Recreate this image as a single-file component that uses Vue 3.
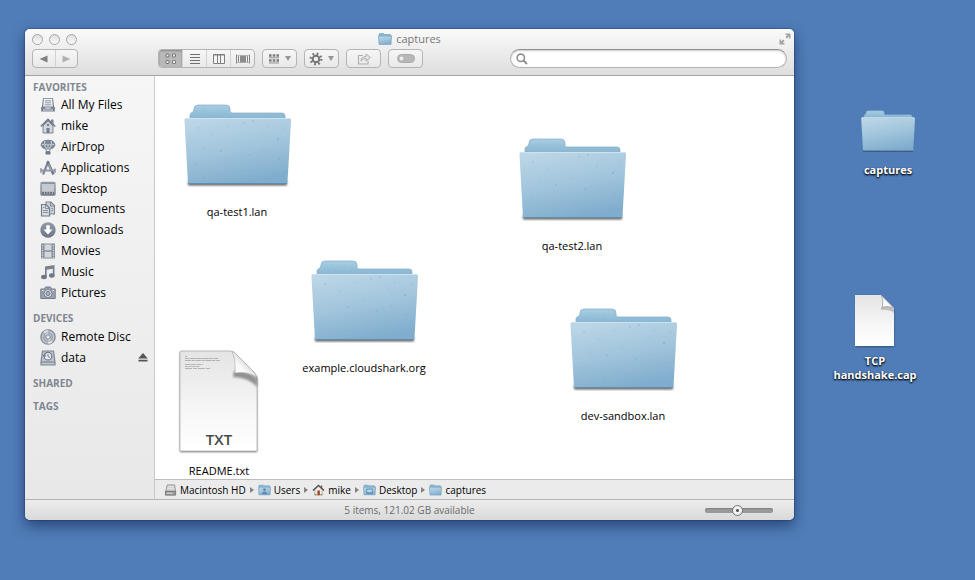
<script setup>
import { ref } from 'vue'

const favorites = [
  { name: 'All My Files', icon: 'all-files' },
  { name: 'mike', icon: 'home' },
  { name: 'AirDrop', icon: 'airdrop' },
  { name: 'Applications', icon: 'apps' },
  { name: 'Desktop', icon: 'desktop' },
  { name: 'Documents', icon: 'documents' },
  { name: 'Downloads', icon: 'downloads' },
  { name: 'Movies', icon: 'movies' },
  { name: 'Music', icon: 'music' },
  { name: 'Pictures', icon: 'pictures' },
]
const devices = [
  { name: 'Remote Disc', icon: 'disc' },
  { name: 'data', icon: 'drive', eject: true },
]
const items = [
  { name: 'qa-test1.lan', kind: 'folder', x: 12, y: 28 },
  { name: 'qa-test2.lan', kind: 'folder', x: 347, y: 62 },
  { name: 'example.cloudshark.org', kind: 'folder', x: 139, y: 184 },
  { name: 'dev-sandbox.lan', kind: 'folder', x: 398, y: 232 },
  { name: 'README.txt', kind: 'text', x: -6, y: 274 },
]
const path = [
  { name: 'Macintosh HD', icon: 'hd' },
  { name: 'Users', icon: 'folder-users' },
  { name: 'mike', icon: 'home-color' },
  { name: 'Desktop', icon: 'folder-desktop' },
  { name: 'captures', icon: 'folder-small' },
]
const views = [
  { name: 'Icons', icon: 'view-icons' },
  { name: 'List', icon: 'view-list' },
  { name: 'Columns', icon: 'view-columns' },
  { name: 'Cover Flow', icon: 'view-flow' },
]
const activeView = ref('Icons')
const query = ref('')
const zoom = ref(48)
</script>

<template>
  <div class="desktop">
    <svg class="sprite" width="0" height="0" aria-hidden="true">
      <defs>
        <linearGradient id="gFront" x1="0.2" y1="0" x2="0.5" y2="1">
          <stop offset="0" stop-color="#bcd6e6" />
          <stop offset="0.5" stop-color="#a1c5dc" />
          <stop offset="1" stop-color="#80adcd" />
        </linearGradient>
        <linearGradient id="gBack" x1="0" y1="0" x2="0" y2="1">
          <stop offset="0" stop-color="#a9cee3" />
          <stop offset="0.35" stop-color="#8fbbd6" />
          <stop offset="1" stop-color="#6d9fc2" />
        </linearGradient>
        <linearGradient id="gPaper" x1="0" y1="0" x2="0" y2="1">
          <stop offset="0" stop-color="#e4e4e4" />
          <stop offset="0.6" stop-color="#f7f7f7" />
          <stop offset="1" stop-color="#ffffff" />
        </linearGradient>
        <linearGradient id="gCurl" x1="0" y1="1" x2="0.6" y2="0.4">
          <stop offset="0" stop-color="#ffffff" />
          <stop offset="0.6" stop-color="#fafafa" />
          <stop offset="1" stop-color="#d8d8d8" />
        </linearGradient>
        <linearGradient id="gSide" x1="0" y1="0" x2="0" y2="1">
          <stop offset="0" stop-color="#929ba8" />
          <stop offset="1" stop-color="#6b7584" />
        </linearGradient>
        <filter id="soft" x="-20%" y="-20%" width="140%" height="140%">
          <feGaussianBlur stdDeviation="1.2" />
        </filter>
      </defs>

      <symbol id="folder" viewBox="0 0 107 84">
        <rect x="4" y="77" width="99" height="4.500" rx="1" fill="#222" opacity="0.7" filter="url(#soft)" />
        <path d="M6 16V11Q6 9 8 8.500Q10 8 10 5Q10 1 14 1H42Q46 1 46 5V7Q46 9 49 9H98Q101 9 101 12V16L103 30H5Z" fill="url(#gBack)" stroke="#85adc8" stroke-width="0.700" />
        <path d="M2 14H105Q107 14 107 17L103.500 78Q103.400 80 102 80H5.500Q4 80 3.900 78L0.500 17Q0.300 14 2 14Z" fill="url(#gFront)" />
        <path d="M1.500 14.500H105.500" stroke="#cfe3ef" stroke-width="1" />
        <path d="M4.500 79.500H103" stroke="#5f8db0" stroke-width="1.200" />
        <g fill="#6c9dbf" opacity="0.55">
          <circle cx="14" cy="24" r="0.700" /><circle cx="29" cy="31" r="0.600" /><circle cx="44" cy="22" r="0.600" />
          <circle cx="60" cy="19" r="0.700" /><circle cx="69" cy="17" r="0.800" /><circle cx="78" cy="29" r="0.600" />
          <circle cx="94" cy="35" r="0.900" /><circle cx="84" cy="22" r="0.600" /><circle cx="100" cy="24" r="0.600" />
          <circle cx="20" cy="44" r="0.600" /><circle cx="37" cy="47" r="0.800" /><circle cx="52" cy="40" r="0.600" />
          <circle cx="66" cy="51" r="0.800" /><circle cx="80" cy="46" r="0.600" /><circle cx="95" cy="55" r="0.700" />
          <circle cx="12" cy="60" r="0.700" /><circle cx="27" cy="64" r="0.600" /><circle cx="44" cy="60" r="0.600" />
          <circle cx="57" cy="67" r="0.700" /><circle cx="65" cy="72" r="0.700" /><circle cx="75" cy="63" r="0.600" />
          <circle cx="90" cy="70" r="0.600" /><circle cx="20" cy="73" r="0.600" /><circle cx="35" cy="71" r="0.700" />
          <circle cx="20" cy="5" r="0.600" /><circle cx="34" cy="6" r="0.600" />
        </g>
      </symbol>

      <symbol id="paper-text" viewBox="0 0 82 106">
        <path d="M2 2H54L79 27V102H2Z" fill="#000" opacity="0.55" filter="url(#soft)" />
        <path d="M3 1H52Q56 1 60 6L76 22Q79 26 79 32V101H2V2Z" fill="url(#gPaper)" stroke="#a9a9a9" stroke-width="0.700" />
        <path d="M56 21Q69 20 79 28V37Q70 27 55 27Z" fill="#555" opacity="0.6" filter="url(#soft)" />
        <path d="M54 1.500Q58 10 57 23Q69 21 78.500 27Q77 23 74 20L60 6Q57 2 54 1.500Z" fill="url(#gCurl)" stroke="#a8a8a8" stroke-width="0.600" />
        <g stroke="#a5a5a5" stroke-width="0.800">
          <path d="M7 6.500H9" /><path d="M7 8.500H40" stroke-dasharray="4 0.600 7 0.500" />
          <path d="M7 10.500H42" stroke-dasharray="6 0.600 3 0.600" /><path d="M7 14.500H25" stroke-dasharray="5 0.700" />
          <path d="M7 16.500H22" stroke-dasharray="3 0.600" /><path d="M7 18.500H32" stroke-dasharray="7 1 4 1" />
        </g>
      </symbol>

      <symbol id="paper" viewBox="0 0 42 54">
        <path d="M2 2H27L40 15V53H2Z" fill="#000" opacity="0.35" filter="url(#soft)" />
        <path d="M1 1H27L40 14V52H1Z" fill="url(#gPaper)" />
        <path d="M27 13Q35 12 40 15V19Q35 15 27 16Z" fill="#777" opacity="0.4" />
        <path d="M27.500 1.500Q29.500 6 28.500 13Q35 11.500 39.500 14Z" fill="#fafafa" stroke="#a0a0a0" stroke-width="0.800" />
      </symbol>

      <symbol id="all-files" viewBox="0 0 16 16">
        <path d="M3.500 1.500H12.500L13.500 10H2.500Z" fill="#f2f3f5" stroke="url(#gSide)" stroke-width="1.200" />
        <path d="M5 3.800H11M5 5.800H11M4.800 7.800H11.200" stroke="#8a93a1" />
        <path d="M1 10H4.500L5.500 11.500H10.500L11.500 10H15V14.500H1Z" fill="#7d8795" />
        <path d="M3 13H13" stroke="#cfd3d9" />
      </symbol>
      <symbol id="home" viewBox="0 0 16 16">
        <path d="M11 1.500H13.500V6H11Z" fill="#7d8795" />
        <path d="M3 8L8 3L13 8V15H3Z" fill="#d3d7dd" stroke="#7d8795" />
        <path d="M0.800 8.500L8 1.500L15.200 8.500" fill="none" stroke="#727c8b" stroke-width="1.700" />
        <path d="M6.500 10H9.500V15H6.500Z" fill="#727c8b" /><circle cx="8" cy="7" r="1.200" fill="#727c8b" />
      </symbol>
      <symbol id="airdrop" viewBox="0 0 16 16">
        <path d="M0.500 6Q1.500 0.800 8 0.800Q14.500 0.800 15.500 6Q14.500 9 10.500 10.500H5.500Q1.500 9 0.500 6Z" fill="#7d8795" />
        <path d="M8 6V10M4.800 6L6.500 10M11.200 6L9.500 10M1.500 6Q3 4.500 4.800 6Q6.500 4.500 8 6Q9.500 4.500 11.200 6Q13 4.500 14.500 6M5 2Q4.200 4 4.800 5.500M11 2Q11.800 4 11.200 5.500" fill="none" stroke="#dde0e4" stroke-width="0.800" />
        <path d="M6 10.500L6.500 12.500H9.500L10 10.500" fill="none" stroke="#7d8795" /><path d="M5.500 12.500H10.500V15.500H5.500Z" fill="#727c8b" />
      </symbol>
      <symbol id="apps" viewBox="0 0 16 16">
        <path d="M8.500 1L3 14.500" stroke="#7d8795" stroke-width="2.200" /><path d="M7.500 1.500L13.500 14.500" stroke="#6c7685" stroke-width="2.600" />
        <path d="M0.500 10.500H15.500" stroke="#8b94a2" stroke-width="2" />
        <path d="M1 8V13M15 8.500V13" stroke="#8b94a2" stroke-width="1.300" /><path d="M8.500 4L11.500 10.500" stroke="#d5d8dd" stroke-width="0.600" />
      </symbol>
      <symbol id="desktop" viewBox="0 0 16 16">
        <rect x="1" y="1.500" width="14" height="12.500" rx="1" fill="#c5cad1" stroke="url(#gSide)" stroke-width="1.300" />
        <path d="M1 2.500H15" stroke="#8a93a0" stroke-width="1" /><path d="M2 12H14" stroke="#69727f" stroke-width="2.500" stroke-dasharray="2 0.700" />
      </symbol>
      <symbol id="documents" viewBox="0 0 16 16">
        <path d="M6 1H11L14.500 4.500V13H6Z" fill="#ccd0d6" stroke="#7d8795" stroke-width="1.100" />
        <path d="M10.500 1V5H14.500M11.500 7.500H13M11.500 9.500H13" fill="none" stroke="#7d8795" />
        <path d="M1.500 3.500H6L9.500 7V15H1.500Z" fill="#d9dce1" stroke="#727c8b" stroke-width="1.200" />
        <path d="M5.500 3.500V7.500H9.500M3 9.500H8M3 11.500H8M3 6.500H4.500" fill="none" stroke="#7d8795" stroke-width="0.900" />
      </symbol>
      <symbol id="downloads" viewBox="0 0 16 16">
        <circle cx="8" cy="8" r="7.700" fill="url(#gSide)" /><path d="M6.300 3.300H9.700V7.500H12.500L8 12.500L3.500 7.500H6.300Z" fill="#fff" />
      </symbol>
      <symbol id="movies" viewBox="0 0 16 16">
        <rect x="1" y="0.500" width="14" height="15" fill="#858e9b" />
        <path d="M4.500 1.500H11.500V7.300H4.500ZM4.500 8.700H11.500V14.500H4.500Z" fill="#d3d7dc" />
        <path d="M2.500 2V15M13.500 2V15" stroke="#dfe2e6" stroke-width="1.200" stroke-dasharray="1.200 1.200" />
      </symbol>
      <symbol id="music" viewBox="0 0 16 16">
        <path d="M5 2.500L14.500 1V11.500H12.800V4.800L6.700 5.800V13H5Z" fill="#78828f" />
        <ellipse cx="4" cy="13" rx="2.900" ry="2.200" fill="#6d7786" /><ellipse cx="11.800" cy="11.500" rx="2.800" ry="2.200" fill="#6d7786" />
      </symbol>
      <symbol id="pictures" viewBox="0 0 16 16">
        <path d="M0.800 4H4.500L5.500 2H10.500L11.500 4H15.200V13.500H0.800Z" fill="#9ba3af" stroke="#737d8b" />
        <circle cx="8" cy="8.500" r="4" fill="#e8eaed" stroke="#737d8b" /><circle cx="8" cy="8.500" r="2.100" fill="#a9b0ba" stroke="#737d8b" /><path d="M2 5.500H3.500M12.500 5.500H14" stroke="#e8eaed" />
      </symbol>
      <symbol id="disc" viewBox="0 0 16 16">
        <circle cx="8" cy="8" r="7.200" fill="#b9bfc8" stroke="#828b98" stroke-width="1.200" />
        <path d="M8 8L3.500 2.500A7 7 0 0 1 8 1.200ZM8 8L12.500 13.500A7 7 0 0 1 8 14.800Z" fill="#dfe2e6" />
        <circle cx="8" cy="8" r="4.300" fill="none" stroke="#929aa6" stroke-width="0.800" /><circle cx="8" cy="8" r="2.200" fill="#eceef0" stroke="#7d8795" />
      </symbol>
      <symbol id="drive" viewBox="0 0 16 16">
        <path d="M2.500 1H13.500L15 12V15H1V12Z" fill="#bdc3cb" stroke="#7d8795" stroke-width="1.200" />
        <circle cx="8" cy="6.200" r="3.800" fill="#e9ebee" stroke="#727c8b" stroke-width="1.200" /><path d="M8 4V6.500L10 7.500M3 4.500L4.500 7L6 5M1.500 12H14.500" fill="none" stroke="#727c8b" />
      </symbol>

      <symbol id="folder-small" viewBox="0 0 14 12">
        <path d="M1 3V1.500Q1 0.500 2 0.500H5Q6 0.500 6.200 1.500H12Q13 1.500 13 3V6H1Z" fill="#8cb7d3" stroke="#7ba5c2" stroke-width="0.700" />
        <path d="M0.500 3H13.500L13 11.500H1Z" fill="url(#gFront)" stroke="#7ba5c2" stroke-width="0.700" />
      </symbol>
      <symbol id="folder-users" viewBox="0 0 14 12">
        <use href="#folder-small" width="14" height="12" /><circle cx="7" cy="5.700" r="1.500" fill="#5b8db2" /><path d="M4 10.500Q4.500 7.500 7 7.500Q9.500 7.500 10 10.500Z" fill="#5b8db2" />
      </symbol>
      <symbol id="folder-desktop" viewBox="0 0 14 12">
        <use href="#folder-small" width="14" height="12" /><rect x="4" y="5" width="6" height="4.500" fill="#b9d7e9" stroke="#5b8db2" /><path d="M4 9H10" stroke="#5b8db2" />
      </symbol>
      <symbol id="hd" viewBox="0 0 14 12">
        <path d="M3.500 0.500H11.500L12.500 7.500H1.800Z" fill="#cfcfcf" stroke="#999" /><path d="M1.500 7.500H12.500V11.500H1.500Z" fill="#a2a2a2" stroke="#737373" />
        <path d="M4 2.500H10.500M3.700 4.500H10.800" stroke="#eee" stroke-width="0.800" /><path d="M3 9.500H9" stroke="#ddd" />
      </symbol>
      <symbol id="home-color" viewBox="0 0 14 12">
        <path d="M3 6L7 2L11 6V11.500H3Z" fill="#f3eee8" stroke="#8f8983" stroke-width="0.700" /><path d="M9.500 1H11V4H9.500Z" fill="#8e5849" />
        <path d="M1 6.500L7 1L13 6.500" fill="none" stroke="#514d4a" stroke-width="1.400" /><path d="M5.800 6.500H8.500V11.500H5.800Z" fill="#a9472f" /><path d="M3 10.800H5M9 10.800H11" stroke="#7a9a55" />
      </symbol>

      <symbol id="view-icons" viewBox="0 0 14 12">
        <g fill="#eee" stroke="#696969"><rect x="2" y="1" width="3" height="3" rx="0.800" /><rect x="8.500" y="1" width="3" height="3" rx="0.800" /><rect x="2" y="7.500" width="3" height="3" rx="0.800" /><rect x="8.500" y="7.500" width="3" height="3" rx="0.800" /></g>
      </symbol>
      <symbol id="view-list" viewBox="0 0 14 12"><path d="M2 1.500H12M2 4.500H12M2 7.500H12M2 10.500H12" stroke="#707070" /></symbol>
      <symbol id="view-columns" viewBox="0 0 14 12"><path d="M1.500 1.500H12.500V10.500H1.500ZM5.500 1V10.500M8.500 1V10.500" fill="#f4f4f4" stroke="#808080" /><path d="M1 2H13" stroke="#808080" /></symbol>
      <symbol id="view-flow" viewBox="0 0 14 12"><rect x="4" y="2.500" width="6" height="7" fill="#8b8b8b" /><path d="M0.500 1.500V10.500M2.500 2.500V9.500M11.500 2.500V9.500M13.500 1.500V10.500" stroke="#858585" /><path d="M0 9.500H14M0 2.500H14" stroke="#999" stroke-width="0.500" /></symbol>
      <symbol id="arrange" viewBox="0 0 12 10">
        <path d="M1 1.500H11M1 6.500H11" stroke="#7d7d7d" stroke-width="2.600" stroke-dasharray="2.600 1.100" /><path d="M1 3.800H11M1 9H11" stroke="#939393" stroke-width="1" />
      </symbol>
      <symbol id="gear" viewBox="0 0 14 14">
        <circle cx="7" cy="7" r="5.300" fill="none" stroke="#757575" stroke-width="2.400" stroke-dasharray="1.700 2.463" /><circle cx="7" cy="7" r="3.300" fill="none" stroke="#757575" stroke-width="2" />
      </symbol>
      <symbol id="share" viewBox="0 0 14 12">
        <path d="M6 2.500H1.500V11H11V7.500" fill="none" stroke="#b0b0b0" stroke-width="1.200" /><path d="M4 8Q4 3.500 9 3.500V1L13.500 4.500L9 8V5.500Q6 5.500 4 8Z" fill="#e6e6e6" stroke="#adadad" />
      </symbol>
      <symbol id="tag" viewBox="0 0 18 9"><rect x="0.500" y="0.500" width="17" height="8" rx="4" fill="#b8b8b8" stroke="#ababab" /><circle cx="4.500" cy="4.500" r="1.900" fill="#eee" /></symbol>
    </svg>

    <section class="window">
      <header class="chrome">
        <div class="titlebar">
          <div class="lights">
            <button class="light" aria-label="Close"></button>
            <button class="light" aria-label="Minimize"></button>
            <button class="light" aria-label="Zoom"></button>
          </div>
          <h1 class="title"><svg class="title-icon"><use href="#folder-small" /></svg>captures</h1>
          <button class="full" aria-label="Full screen">
            <svg width="12" height="12" viewBox="0 0 12 12"><path d="M6.500 0.500H11.500V5.500H10V3.500L8 5.500L6.500 4L8.500 2H6.500ZM0.500 6.500H2V8.500L4 6.500L5.500 8L3.500 10H5.500V11.500H0.500Z" fill="#a2a2a2" /></svg>
          </button>
        </div>
        <div class="toolbar">
          <div class="group nav">
            <button aria-label="Back"><svg width="9" height="8" viewBox="0 0 9 8"><path d="M0.500 4L8.500 0.500V7.500Z" fill="#808080" /></svg></button>
            <button aria-label="Forward"><svg width="9" height="8" viewBox="0 0 9 8"><path d="M8.500 4L0.500 0.500V7.500Z" fill="#b2b2b2" /></svg></button>
          </div>
          <div class="group views">
            <button v-for="v in views" :key="v.name" :aria-label="v.name" :class="{ active: activeView === v.name }" @click="activeView = v.name">
              <svg class="tool-icon"><use :href="'#' + v.icon" /></svg>
            </button>
          </div>
          <button class="tool" aria-label="Arrange"><svg class="tool-icon small"><use href="#arrange" /></svg><span class="caret"></span></button>
          <button class="tool" aria-label="Actions"><svg class="tool-icon gear"><use href="#gear" /></svg><span class="caret"></span></button>
          <button class="tool" aria-label="Share"><svg class="tool-icon"><use href="#share" /></svg></button>
          <button class="tool" aria-label="Edit tags"><svg class="tag-icon"><use href="#tag" /></svg></button>
          <label class="search">
            <svg width="12" height="12" viewBox="0 0 12 12"><circle cx="4.800" cy="4.800" r="3.700" fill="none" stroke="#8f8f8f" stroke-width="1.600" /><path d="M7.500 7.500L11 11" stroke="#8f8f8f" stroke-width="2" /></svg>
            <input v-model="query" type="text" aria-label="Search" />
          </label>
        </div>
      </header>

      <div class="body">
        <nav class="sidebar">
          <h2>FAVORITES</h2>
          <ul class="places favorites">
            <li v-for="f in favorites" :key="f.name"><a href="#"><svg class="side-icon"><use :href="'#' + f.icon" /></svg>{{ f.name }}</a></li>
          </ul>
          <h2>DEVICES</h2>
          <ul class="places devices">
            <li v-for="d in devices" :key="d.name">
              <a href="#"><svg class="side-icon"><use :href="'#' + d.icon" /></svg>{{ d.name }}</a>
              <button v-if="d.eject" class="eject" aria-label="Eject"><svg width="10" height="9" viewBox="0 0 10 9"><path d="M5 0L9.800 5.500H0.200ZM0.500 6.800H9.500V8.500H0.500Z" fill="#555" /></svg></button>
            </li>
          </ul>
          <h2>SHARED</h2>
          <h2>TAGS</h2>
        </nav>

        <div class="content">
          <main class="canvas">
            <button v-for="i in items" :key="i.name" class="item" :style="{ left: i.x + 'px', top: i.y + 'px' }">
              <svg v-if="i.kind === 'folder'" class="folder"><use href="#folder" /></svg>
              <svg v-else class="text" viewBox="0 0 82 106">
                <use href="#paper-text" width="82" height="106" />
                <text class="badge" x="41" y="95" text-anchor="middle">TXT</text>
              </svg>
              <span>{{ i.name }}</span>
            </button>
          </main>
          <nav class="path">
            <template v-for="(p, n) in path" :key="p.name">
              <span v-if="n" class="sep"></span>
              <a href="#"><svg class="path-icon"><use :href="'#' + p.icon" /></svg>{{ p.name }}</a>
            </template>
          </nav>
        </div>
      </div>

      <footer class="status">
        <span>5 items, 121.02 GB available</span>
        <input v-model="zoom" class="slider" type="range" min="0" max="100" aria-label="Icon size" />
      </footer>
    </section>

    <button class="shortcut captures"><svg class="mini-folder"><use href="#folder" /></svg><span>captures</span></button>
    <button class="shortcut capture-file"><svg class="mini-paper"><use href="#paper" /></svg><span>TCP<br />handshake.cap</span></button>
  </div>
</template>

<style>
body { margin: 0; background: #507db8; }
</style>

<style scoped>
* { box-sizing: border-box; }
.desktop {
  position: relative;
  min-height: 100vh;
  overflow: hidden;
  background: #507db8;
  color: #000;
  font: 500 12px/16px "Open Sans", "Noto Sans", sans-serif;
}
.sprite { position: absolute; }
svg { display: block; flex: none; }
button { margin: 0; padding: 0; border: 0; background: none; color: inherit; font: inherit; }
a { color: inherit; text-decoration: none; }
h1, h2, ul { margin: 0; padding: 0; }
ul { list-style: none; }

.window {
  position: absolute;
  inset: 29px 181px 60px 25px;
  display: flex;
  flex-direction: column;
  overflow: hidden;
  border-radius: 5px;
  background: #fff;
  box-shadow: 0 0 1px 1px rgba(20, 40, 80, 0.3), 0 6px 14px rgba(0, 15, 60, 0.5);
}
.chrome {
  flex: none;
  padding: 0 7px 7px;
  border-bottom: 1px solid #a5a5a5;
  background: linear-gradient(#fafafa, #dedede);
}
.titlebar {
  display: grid;
  grid-template-columns: 1fr auto 1fr;
  align-items: center;
  height: 20px;
}
.lights { display: flex; gap: 6px; }
.light {
  width: 11px;
  height: 11px;
  border: 1px solid #a3a3a3;
  border-radius: 50%;
  background: linear-gradient(#dedede, #fbfbfb);
}
.title {
  display: flex;
  align-items: center;
  gap: 4px;
  color: #777;
  font-size: 11px;
  font-weight: 500;
}
.title-icon { width: 14px; height: 12px; }
.full { justify-self: end; margin-right: -4px; }
.toolbar { display: flex; align-items: center; gap: 7px; height: 19px; }
.group, .tool {
  display: flex;
  height: 19px;
  border: 1px solid #b4b4b4;
  border-radius: 4px;
  background: linear-gradient(#f6f6f6, #e9e9e9);
}
.group { overflow: hidden; }
.group button { flex: 1; display: flex; align-items: center; justify-content: center; }
.group button + button { border-left: 1px solid #d2d2d2; }
.group button.active { background: #b9b9b9; box-shadow: inset 0 1px 2px #858585; }
.nav { width: 46px; margin-right: 73px; }
.views { width: 97px; }
.tool { width: 35px; align-items: center; justify-content: center; gap: 5px; }
.tool-icon { width: 14px; height: 12px; }
.tool-icon.small { width: 12px; height: 10px; }
.tool-icon.gear { width: 14px; height: 14px; }
.tag-icon { width: 18px; height: 9px; }
.caret { border: 3px solid transparent; border-top: 5px solid #969696; border-bottom: 0; }
.search {
  display: flex;
  align-items: center;
  gap: 4px;
  flex: 1;
  height: 19px;
  margin-left: 80px;
  padding: 0 8px 0 5px;
  border: 1px solid #b3b3b3;
  border-top-color: #8e8e8e;
  border-radius: 10px;
  background: #fff;
  box-shadow: inset 0 1px 2px #c9c9c9;
}
.search input { flex: 1; min-width: 0; height: 15px; padding: 0; border: 0; outline: 0; background: none; font: inherit; }

.body { flex: 1; display: flex; min-height: 0; }
.sidebar {
  flex: none;
  width: 130px;
  padding-top: 3px;
  border-right: 1px solid #c9c9c9;
  background: linear-gradient(#f6f6f6, #e8e8e8);
}
.sidebar h2 { padding-left: 8px; color: #7f8690; font-size: 10px; font-weight: 700; line-height: 16px; }
.sidebar h2 + h2, .places + h2 { margin-top: 7px; }
.places { display: grid; grid-auto-rows: 1fr; }
.favorites { height: 208px; }
.devices { height: 42px; }
.places li { display: flex; align-items: center; justify-content: space-between; padding: 0 6px 0 15px; }
.places a { display: flex; align-items: center; gap: 5px; }
.side-icon { width: 16px; height: 16px; }

.content { flex: 1; display: flex; flex-direction: column; min-width: 0; }
.canvas { position: relative; flex: 1; overflow: hidden; }
.item {
  position: absolute;
  display: flex;
  flex-direction: column;
  align-items: center;
  width: 140px;
  font-size: 11px;
}
.folder { width: 107px; height: 84px; margin-bottom: 16px; }
.text { width: 82px; height: 106px; margin-bottom: 7px; }
.badge { fill: #484848; font-size: 15px; font-weight: 600; }
.path {
  display: flex;
  align-items: center;
  gap: 4px;
  height: 20px;
  padding-left: 9px;
  border-top: 1px solid #bdbdbd;
  background: #ebebeb;
  font-size: 10px;
}
.path a { display: flex; align-items: center; gap: 3px; }
.path-icon { width: 13px; height: 12px; }
.sep { border: 3px solid transparent; border-left: 4px solid #858585; border-right: 0; }
.status {
  flex: none;
  display: grid;
  grid-template-columns: 1fr auto 1fr;
  align-items: center;
  height: 21px;
  padding: 0 21px;
  border-top: 1px solid #b5b5b5;
  background: linear-gradient(#ededed, #d9d9d9);
  color: #6a6a6a;
  font-size: 10px;
}
.status span { grid-column: 2; }
.slider { justify-self: end; width: 68px; height: 12px; margin: 0; appearance: none; background: none; }
.slider::-webkit-slider-runnable-track { height: 5px; border-radius: 3px; background: #999; box-shadow: inset 0 1px 1px #808080; }
.slider::-webkit-slider-thumb {
  width: 11px;
  height: 11px;
  margin-top: -3px;
  border: 1px solid #777;
  border-radius: 50%;
  appearance: none;
  background: radial-gradient(circle, #555 0 1px, #f4f4f4 2px 4px, #ccc 5px);
}

.shortcut {
  position: absolute;
  display: flex;
  flex-direction: column;
  align-items: center;
  width: 120px;
  color: #fff;
  font-size: 11px;
  font-weight: 700;
  line-height: 14px;
  text-shadow: 0 1px 2px #000, 0 1px 2px rgba(0, 0, 0, 0.7);
}
.captures { top: 110px; right: 27px; }
.capture-file { top: 294px; right: 40px; }
.mini-folder { width: 54px; height: 43px; margin-bottom: 10px; }
.mini-paper { width: 42px; height: 54px; margin-bottom: 6px; }
</style>
